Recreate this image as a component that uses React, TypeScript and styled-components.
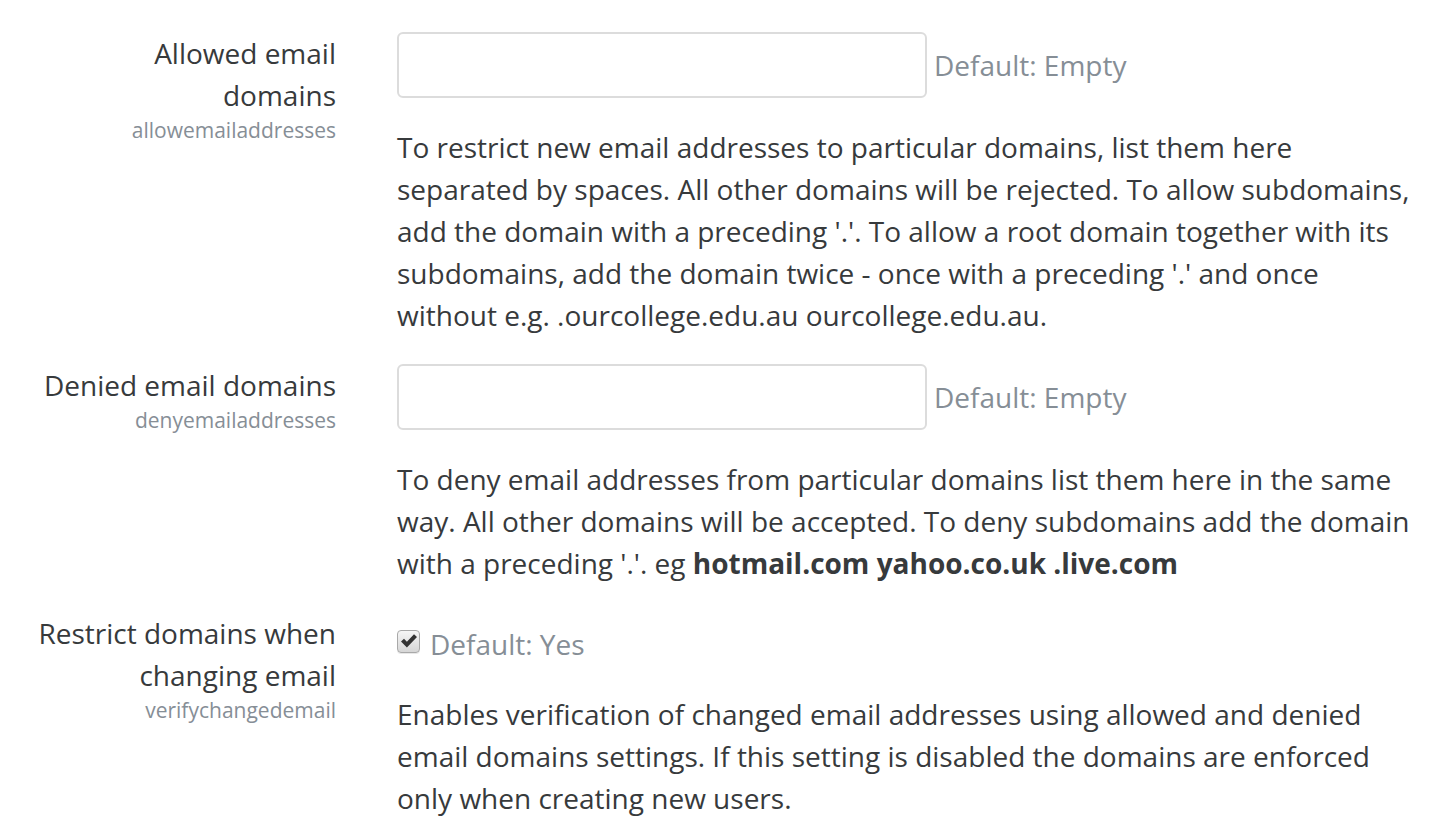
import styled, { createGlobalStyle } from "styled-components";

const GlobalStyle = createGlobalStyle`
  html, body {
    margin: 0;
    padding: 0;
    background: #fff;
  }
  body {
    font-family: "Open Sans", "Liberation Sans", sans-serif;
    font-size: 28px;
    line-height: 42px;
    color: #373a3c;
  }
`;

const Page = styled.div`
  padding-top: 32px;
  width: 1430px;
`;

const Row = styled.div`
  display: grid;
  grid-template-columns: 336px 1020px;
  column-gap: 61px;
  margin-bottom: 28px;
`;

const LabelCol = styled.div`
  text-align: right;
`;

const Label = styled.div`
  color: #373a3c;
`;

const SettingName = styled.div`
  font-size: 21px;
  line-height: 28px;
  color: #868e96;
`;

const Content = styled.div`
  display: flex;
  flex-direction: column;
  gap: 28px;
`;

const FieldLine = styled.div`
  display: flex;
  align-items: center;
  gap: 7px;
`;

const TextInput = styled.input`
  box-sizing: border-box;
  width: 530px;
  height: 66px;
  border: 2px solid #dcdcdc;
  border-radius: 6px;
  background: #fff;
  font: inherit;
  padding: 0 16px;
  outline: none;
`;

const Default = styled.span`
  color: #868e96;
`;

const CheckLine = styled.div`
  display: flex;
  align-items: center;
  gap: 10px;
  height: 42px;
  padding-top: 11px;
`;

const CheckBox = styled.span`
  box-sizing: border-box;
  width: 23px;
  height: 23px;
  border: 1px solid #a9a9a9;
  border-radius: 4px;
  background: linear-gradient(#f6f6f6, #d6d6d6);
  box-shadow: 0 1px 0 #e8e8e8;
  display: flex;
  align-items: center;
  justify-content: center;
  margin-top: -6px;
`;

const Description = styled.div`
  color: #373a3c;

  b {
    font-weight: 700;
  }
`;

const Check = () => (
  <CheckBox>
    <svg width="18" height="16" viewBox="0 0 18 16">
      <path d="M1 8.6 L4 5.8 L6.9 8.7 L14 1.2 L17 4 L6.9 14.6 Z" fill="#333" />
    </svg>
  </CheckBox>
);

export default function App() {
  return (
    <>
      <GlobalStyle />
      <Page>
        <Row>
          <LabelCol>
            <Label>
              Allowed email
              <br />
              domains
            </Label>
            <SettingName>allowemailaddresses</SettingName>
          </LabelCol>
          <Content>
            <FieldLine>
              <TextInput type="text" />
              <Default>Default: Empty</Default>
            </FieldLine>
            <Description>
              To restrict new email addresses to particular domains, list them here separated by
              spaces. All other domains will be rejected. To allow subdomains, add the domain with a
              preceding '.'. To allow a root domain together with its subdomains, add the domain
              twice - once with a preceding '.' and once without e.g. .ourcollege.edu.au
              ourcollege.edu.au.
            </Description>
          </Content>
        </Row>
        <Row>
          <LabelCol>
            <Label>Denied email domains</Label>
            <SettingName>denyemailaddresses</SettingName>
          </LabelCol>
          <Content>
            <FieldLine>
              <TextInput type="text" />
              <Default>Default: Empty</Default>
            </FieldLine>
            <Description>
              To deny email addresses from particular domains list them here in the same way. All
              other domains will be accepted. To deny subdomains add the domain with a preceding
              '.'. eg <b>hotmail.com yahoo.co.uk .live.com</b>
            </Description>
          </Content>
        </Row>
        <Row>
          <LabelCol>
            <Label>
              Restrict domains when
              <br />
              changing email
            </Label>
            <SettingName>verifychangedemail</SettingName>
          </LabelCol>
          <Content>
            <CheckLine>
              <Check />
              <Default>Default: Yes</Default>
            </CheckLine>
            <Description>
              Enables verification of changed email addresses using allowed and denied email
              domains settings. If this setting is disabled the domains are enforced only when
              creating new users.
            </Description>
          </Content>
        </Row>
      </Page>
    </>
  );
}
